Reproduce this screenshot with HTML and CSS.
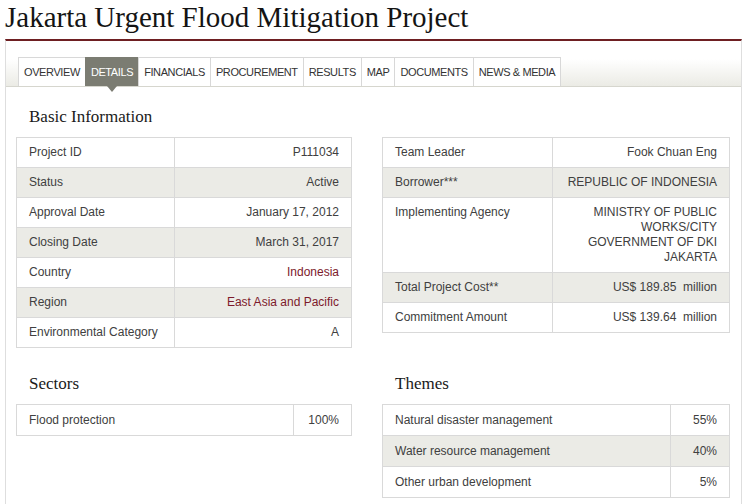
FILE: index.html
```html
<!DOCTYPE html>
<html>
<head>
<meta charset="utf-8">
<link rel="stylesheet" href="styles.css">
</head>
<body>
<h1 class="title">Jakarta Urgent Flood Mitigation Project</h1>
<div class="panel">
  <div class="tabbar">
    <ul class="tabs">
      <li class="tab">OVERVIEW</li>
      <li class="tab active">DETAILS</li>
      <li class="tab">FINANCIALS</li>
      <li class="tab">PROCUREMENT</li>
      <li class="tab">RESULTS</li>
      <li class="tab">MAP</li>
      <li class="tab">DOCUMENTS</li>
      <li class="tab last">NEWS &amp; MEDIA</li>
    </ul>
  </div>
  <div class="content">
    <section class="block">
      <h2 class="heading">Basic Information</h2>
      <table class="info info-left">
        <tr><td class="label">Project ID</td><td class="value">P111034</td></tr>
        <tr class="alt"><td class="label">Status</td><td class="value">Active</td></tr>
        <tr><td class="label">Approval Date</td><td class="value">January 17, 2012</td></tr>
        <tr class="alt"><td class="label">Closing Date</td><td class="value">March 31, 2017</td></tr>
        <tr><td class="label">Country</td><td class="value"><a class="link">Indonesia</a></td></tr>
        <tr class="alt"><td class="label">Region</td><td class="value"><a class="link">East Asia and Pacific</a></td></tr>
        <tr><td class="label">Environmental Category</td><td class="value">A</td></tr>
      </table>
    </section>
    <section class="block">
      <h2 class="heading">&nbsp;</h2>
      <table class="info info-right">
        <tr><td class="label">Team Leader</td><td class="value">Fook Chuan Eng</td></tr>
        <tr class="alt"><td class="label">Borrower***</td><td class="value">REPUBLIC OF INDONESIA</td></tr>
        <tr><td class="label">Implementing Agency</td><td class="value">MINISTRY OF PUBLIC<br>WORKS/CITY<br>GOVERNMENT OF DKI<br>JAKARTA</td></tr>
        <tr class="alt"><td class="label">Total Project Cost**</td><td class="value">US$ 189.85&nbsp; million</td></tr>
        <tr><td class="label">Commitment Amount</td><td class="value">US$ 139.64&nbsp; million</td></tr>
      </table>
    </section>
    <section class="block lower">
      <h2 class="heading">Sectors</h2>
      <table class="info info-left sectors">
        <tr><td class="label">Flood protection</td><td class="value">100%</td></tr>
      </table>
    </section>
    <section class="block lower">
      <h2 class="heading">Themes</h2>
      <table class="info info-right themes">
        <tr><td class="label">Natural disaster management</td><td class="value">55%</td></tr>
        <tr class="alt"><td class="label">Water resource management</td><td class="value">40%</td></tr>
        <tr><td class="label">Other urban development</td><td class="value">5%</td></tr>
      </table>
    </section>
  </div>
</div>
</body>
</html>
```
FILE: styles.css
```css
html, body {
  margin: 0;
  padding: 0;
  background: #ffffff;
}

body {
  font-family: "Liberation Sans", Arial, sans-serif;
  color: #404040;
}

.title {
  margin: 0;
  padding: 0 0 0 5px;
  height: 39px;
  box-sizing: border-box;
  font-family: "Liberation Serif", "Times New Roman", serif;
  font-weight: normal;
  font-size: 29px;
  line-height: 34px;
  color: #141414;
}

.panel {
  margin: 0 5px;
  border-top: 2px solid #6e1f22;
  border-left: 1px solid #dedede;
  border-right: 1px solid #dedede;
  height: 470px;
}

.tabbar {
  padding: 16px 0 0 12px;
  background: linear-gradient(to bottom, #ffffff 0px, #ffffff 18px, #ebebe5 45px);
  border-bottom: 1px solid #d6d6ce;
}

.tabs {
  list-style: none;
  margin: 0;
  padding: 0;
  display: flex;
}

.tab {
  position: relative;
  height: 28px;
  line-height: 29px;
  padding: 0 5px;
  border-top: 1px solid #d8d8d8;
  border-left: 1px solid #d8d8d8;
  background: #ffffff;
  font-size: 11px;
  letter-spacing: -0.4px;
  color: #333333;
}

.tab.last {
  border-right: 1px solid #d8d8d8;
}

.tab.active {
  background: #7b7c72;
  border-top-color: #7b7c72;
  border-left-color: #7b7c72;
  color: #ffffff;
}

.tab.active::after {
  content: "";
  position: absolute;
  left: 50%;
  bottom: -6px;
  margin-left: -5px;
  border-left: 5px solid transparent;
  border-right: 5px solid transparent;
  border-top: 6px solid #7b7c72;
}

.content {
  display: grid;
  grid-template-columns: 336px 348px;
  column-gap: 30px;
  padding: 20px 0 0 10px;
  align-items: start;
}

.heading {
  margin: 0 0 10px 0;
  padding-left: 13px;
  font-family: "Liberation Serif", "Times New Roman", serif;
  font-weight: normal;
  font-size: 17px;
  line-height: 20px;
  color: #1a1a1a;
}

.block.lower {
  margin-top: 26px;
}

.info {
  border-collapse: collapse;
  font-size: 12px;
  line-height: 15px;
}

.info-left { width: 336px; }
.info-right { width: 348px; }

.info td {
  border: 1px solid #d9d9d9;
  padding: 7px 12px 7px 12px;
  vertical-align: top;
}

.sectors td,
.themes td {
  padding-top: 8px;
  padding-bottom: 7px;
}

.info .value {
  text-align: right;
}

.info tr.alt td {
  background: #ebebe6;
}

.info-left .label { width: 133px; }
.info-right .label { width: 145px; }
.sectors .label { width: 252px; }
.themes .label { width: 263px; }

.link {
  color: #7d1a2b;
  text-decoration: none;
}
```
